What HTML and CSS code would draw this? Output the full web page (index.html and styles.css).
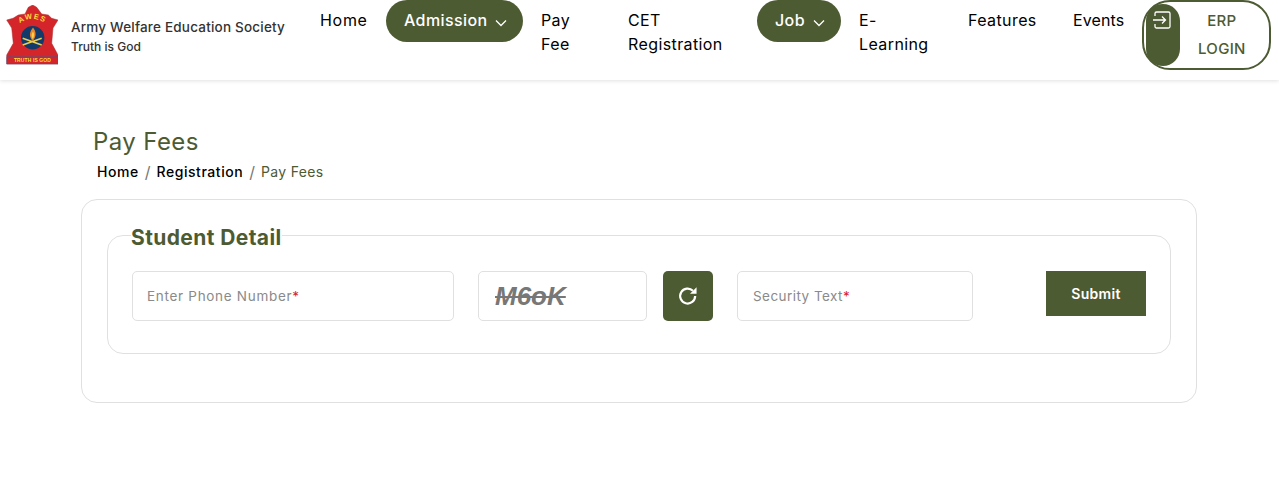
FILE: index.html
```html
<!DOCTYPE html>
<html lang="en">
<head>
<meta charset="utf-8">
<title>Pay Fees</title>
<link rel="stylesheet" href="styles.css">
</head>
<body>
<header class="header">
  <a class="brand" href="#">
    <svg class="logo" viewBox="0 0 52 60" width="52" height="60">
      <path d="M0.700 15 L7 13.300 L12.300 10 L19 9 L22.300 2.300 L26.700 0 L30.700 2.300 L35.700 9 L42.300 10 L45.700 13.300 L52 15 L47 23 L45.700 38.300 L52 50 L52 59 L0.700 59 L0.700 50 L7.300 38.300 L5.700 23 Z" fill="#d4262a" stroke="#a82a2a" stroke-width=".5"/>
      <circle cx="26.700" cy="32.700" r="11.700" fill="#123a6b"/>
      <path id="awesArc" d="M10 21 Q26.500 7 43 21" fill="none"/>
      <text class="logo-arc"><textPath href="#awesArc" startOffset="50%" text-anchor="middle">AWES</textPath></text>
      <path d="M16.700 33.300 L35.700 40 M16.700 40 L35.700 33.300" stroke="#e8cf55" stroke-width="1.700"/>
      <path d="M26.700 36 C22.500 31 23.500 27 27 22.500 C30.500 27 30.500 31 26.700 36Z" fill="#e9862b"/>
      <path d="M26.700 34 C25 31 25.500 29 27 26.500 C28.500 29 28.500 31 26.700 34Z" fill="#f3d24e"/>
      <rect x="1" y="52" width="50.700" height="6.800" fill="#d4262a" stroke="#3d5a98" stroke-width=".8"/>
      <text class="logo-motto" x="26.500" y="57.400" text-anchor="middle">TRUTH IS GOD</text>
    </svg>
    <span class="brand-text">
      <span class="brand-name">Army Welfare Education Society</span>
      <span class="brand-motto">Truth is God</span>
    </span>
  </a>
  <nav class="nav">
    <a class="nav-item w-home" href="#">Home</a>
    <a class="nav-item pill w-adm" href="#">Admission
      <svg class="chev" viewBox="0 0 12 8" width="12" height="8"><path d="M1 1.5 L6 6.5 L11 1.5" fill="none" stroke="currentColor" stroke-width="1.3"/></svg></a>
    <a class="nav-item w-pay" href="#">Pay Fee</a>
    <a class="nav-item w-cet" href="#">CET Registration</a>
    <a class="nav-item pill w-job" href="#">Job
      <svg class="chev" viewBox="0 0 12 8" width="12" height="8"><path d="M1 1.5 L6 6.5 L11 1.5" fill="none" stroke="currentColor" stroke-width="1.3"/></svg></a>
    <a class="nav-item w-learn" href="#">E-Learning</a>
    <a class="nav-item w-feat" href="#">Features</a>
    <a class="nav-item w-evt" href="#">Events</a>
    <a class="erp" href="#">
      <span class="erp-icon">
        <svg viewBox="0 0 20 20" width="20" height="20"><path d="M3 6 V3.5 A1.5 1.5 0 0 1 4.500 2 H16.500 A1.500 1.500 0 0 1 18 3.500 V16.500 A1.500 1.500 0 0 1 16.500 18 H4.500 A1.500 1.500 0 0 1 3 16.500 V14 M1 10 H13 M10 6.500 L13.500 10 L10 13.500" fill="none" stroke="#fff" stroke-width="1.300"/></svg>
      </span>
      <span class="erp-text">ERP LOGIN</span>
    </a>
  </nav>
</header>

<main class="main">
  <h1 class="title">Pay Fees</h1>
  <ol class="crumbs">
    <li><a href="#">Home</a></li>
    <li class="sep">/</li>
    <li><a href="#">Registration</a></li>
    <li class="sep">/</li>
    <li class="current">Pay Fees</li>
  </ol>
  <section class="card">
    <fieldset class="group">
      <legend>Student Detail</legend>
      <div class="row">
        <label class="field f-phone"><input type="text" aria-label="Enter Phone Number"><span class="hint">Enter Phone Number<b>*</b></span></label>
        <div class="captcha">M6oK</div>
        <button class="refresh" type="button" aria-label="Refresh">
          <svg viewBox="0 0 20 20" width="22" height="22"><path d="M16.500 10 A6.800 6.800 0 1 1 14.500 5.200" fill="none" stroke="#fff" stroke-width="2"/><path d="M17.800 2 V8 H11.800 Z" fill="#fff"/></svg>
        </button>
        <label class="field f-sec"><input type="text" aria-label="Security Text"><span class="hint">Security Text<b>*</b></span></label>
        <button class="submit" type="button">Submit</button>
      </div>
    </fieldset>
  </section>
</main>
</body>
</html>
```

FILE: styles.css
```css
* { box-sizing: border-box; }
html, body { margin: 0; padding: 0; }
body {
  font-family: Inter, "Noto Sans", sans-serif;
  background: #fff;
  color: #000;
  height: 478px;
  overflow: hidden;
}
a { color: inherit; text-decoration: none; }

.header {
  height: 80px;
  display: flex;
  box-shadow: 0 1px 4px rgba(0,0,0,.12);
  padding-left: 6px;
}
.brand { display: flex; flex: none; align-items: flex-start; gap: 13px; padding-top: 5px; width: 296px; }
.logo { display: block; }
.logo-arc { font: 700 7.500px "Liberation Sans", sans-serif; fill: #fbdc3f; letter-spacing: 1.200px; }
.logo-motto { font: 700 5px "Liberation Sans", sans-serif; fill: #fbdc3f; letter-spacing: .1px; }
.brand-text { display: flex; flex-direction: column; gap: 1px; padding-top: 12px; color: #333; }
.brand-name { font-size: 13.500px; font-weight: 500; line-height: 20px; letter-spacing: .2px; white-space: nowrap; }
.brand-motto { font-size: 12px; font-weight: 500; line-height: 18px; }

.nav { display: flex; flex: none; align-items: flex-start; }
.nav-item {
  display: block;
  padding: 8px 18px 10px;
  font-size: 16px;
  line-height: 24px;
  letter-spacing: .4px;
  flex: none;
}
.pill { background: #4d5b33; color: #fff; border-radius: 21px; font-weight: 500; height: 42px; white-space: nowrap; }
.chev { margin-left: 3px; vertical-align: -1px; }
.w-home { width: 84px; letter-spacing: .7px; }
.w-adm { width: 137px; }
.w-pay { width: 87px; }
.w-cet { width: 147px; }
.w-job { width: 84px; }
.w-learn { width: 109px; }
.w-feat { width: 105px; }
.w-evt { width: 87px; white-space: nowrap; letter-spacing: .1px; }

.erp {
  width: 129px;
  height: 70px;
  flex: none;
  border: 2px solid #4d5b33;
  border-radius: 28px;
  padding: 2px;
  display: flex;
  color: #4d5b33;
}
.erp-icon {
  width: 34px;
  height: 62px;
  background: #4d5b33;
  border-radius: 17px;
  flex: none;
  padding: 6px 0 0 6px;
}
.erp-icon svg { display: block; }
.erp-text {
  flex: 1;
  text-align: center;
  font-size: 15px;
  font-weight: 500;
  line-height: 28px;
  letter-spacing: .3px;
  padding: 3px 22px 0 18px;
}

.main { padding: 48px 82px 0 81px; }
.title {
  margin: 0 0 0 12px;
  font-size: 24px;
  font-weight: 400;
  line-height: 28px;
  color: #4d5b33;
  letter-spacing: .4px;
}
.crumbs {
  list-style: none;
  display: flex;
  gap: 6px;
  margin: 6px 0 0 16px;
  padding: 0;
  font-size: 14px;
  font-weight: 500;
  line-height: 20px;
  letter-spacing: .55px;
}
.crumbs .sep { color: #777; font-weight: 400; font-size: 16px; letter-spacing: 0; }
.crumbs .current { color: #4d5b33; font-weight: 400; letter-spacing: .35px; }

.card {
  margin-top: 17px;
  height: 204px;
  border: 1px solid #e0e0e0;
  border-radius: 16px;
  padding: 20px 25px 0;
}
.group {
  margin: 0;
  padding: 0 24px;
  height: 134px;
  border: 1px solid #e0e0e0;
  border-radius: 16px;
}
.group legend {
  padding: 6px 0 0;
  margin-left: -1px;
  font-size: 21px;
  font-weight: 700;
  line-height: 24px;
  letter-spacing: .4px;
  color: #4d5b33;
}
.row { display: flex; align-items: flex-start; margin-top: 21px; }
.field { position: relative; display: block; height: 50px; flex: none; }
.field input {
  width: 100%;
  height: 100%;
  border: 1px solid #e0e0e0;
  border-radius: 5px;
  background: #fff;
}
.hint {
  position: absolute;
  left: 15px;
  top: 15px;
  font-size: 13.500px;
  line-height: 20px;
  letter-spacing: .7px;
  color: #8a8a8a;
  pointer-events: none;
}
.hint b { color: #d8232a; font-weight: 400; }
.f-phone { width: 322px; margin-right: 24px; }
.f-sec { width: 236px; margin-right: 73px; }
.f-sec .hint { left: 16px; letter-spacing: .45px; }
.captcha {
  width: 169px;
  height: 50px;
  flex: none;
  margin-right: 16px;
  padding-left: 16px;
  border: 1px solid #e0e0e0;
  border-radius: 5px;
  font: italic 700 26px/48px "Liberation Sans", sans-serif;
  color: #777;
  text-decoration: line-through;
}
.refresh {
  width: 50px;
  height: 50px;
  flex: none;
  margin-right: 24px;
  background: #4d5b33;
  border: 0;
  border-radius: 5px;
  padding: 0;
  display: flex;
  align-items: center;
  justify-content: center;
}
.submit {
  width: 100px;
  height: 45px;
  flex: none;
  background: #4d5b33;
  color: #fff;
  border: 0;
  font: 600 14px Inter, sans-serif;
  letter-spacing: .3px;
}
```
